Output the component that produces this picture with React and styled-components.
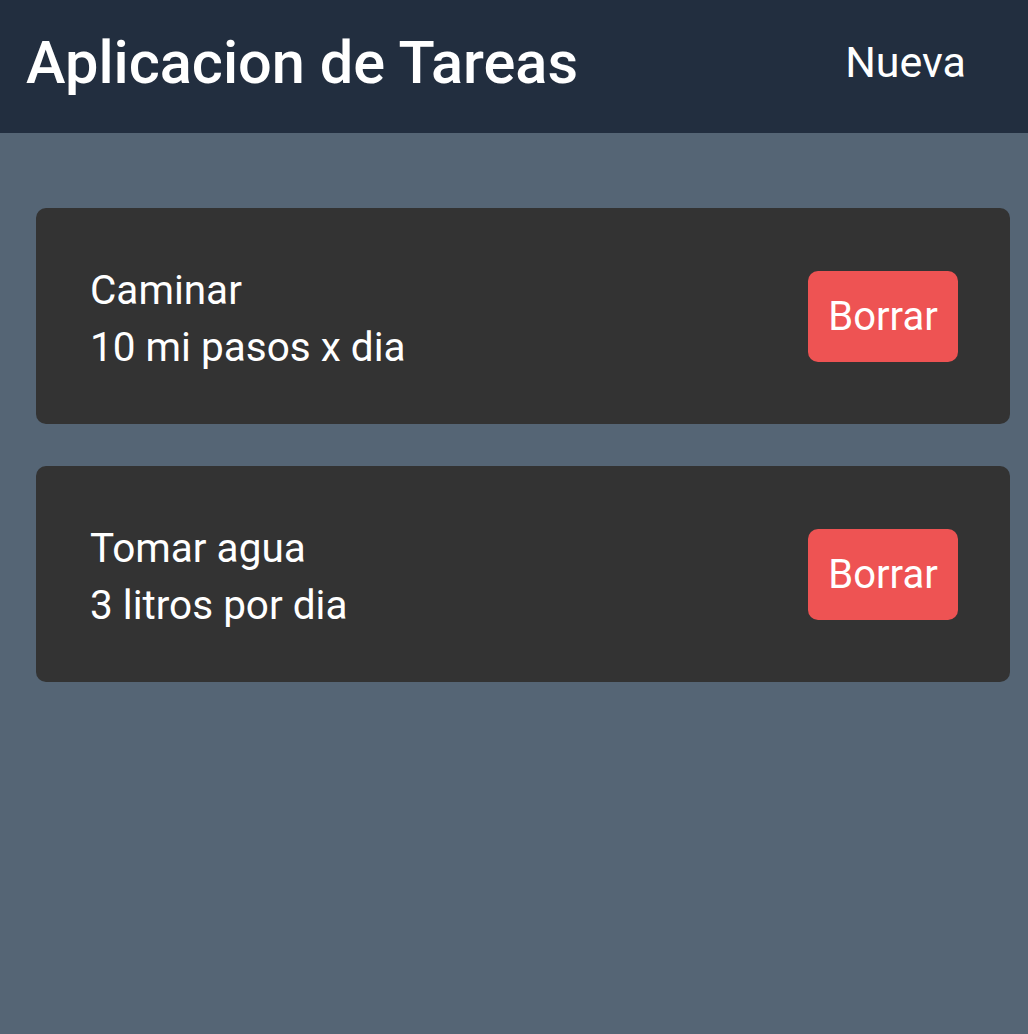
import React from "react";
import styled, { createGlobalStyle } from "styled-components";

const Global = createGlobalStyle`
  html, body { margin: 0; padding: 0; }
  body {
    background: #556575;
    font-family: Roboto, "Noto Sans", "Liberation Sans", sans-serif;
    color: #ffffff;
  }
`;

const Page = styled.div`
  min-height: 1034px;
  background: #556575;
`;

const Header = styled.header`
  height: 133px;
  background: #222e3f;
  display: flex;
  align-items: center;
  justify-content: space-between;
  padding: 0 62px 0 26px;
  box-sizing: border-box;
`;

const Title = styled.h1`
  margin: 0;
  font-size: 59.5px;
  font-weight: 500;
  letter-spacing: 0;
  line-height: 1;
  margin-top: -5px;
`;

const NewLink = styled.a`
  font-size: 43px;
  font-weight: 400;
  color: #ffffff;
  text-decoration: none;
  line-height: 1;
  margin-top: -8px;
  cursor: pointer;
`;

const List = styled.main`
  display: flex;
  flex-direction: column;
  gap: 42px;
  padding: 75px 18px 0 36px;
`;

const Card = styled.div`
  background: #333333;
  border-radius: 10px;
  height: 216px;
  box-sizing: border-box;
  display: flex;
  align-items: center;
  justify-content: space-between;
  padding: 0 52px 0 54px;
`;

const Info = styled.div`
  display: flex;
  flex-direction: column;
  font-size: 40.5px;
  line-height: 57px;
  margin-top: 6px;
`;

const Line = styled.span`
  display: block;
`;

const DeleteButton = styled.button`
  background: #ee5353;
  color: #ffffff;
  border: none;
  border-radius: 10px;
  width: 150px;
  height: 91px;
  font-family: inherit;
  font-size: 40px;
  padding: 0;
  cursor: pointer;
`;

const tasks = [
  { id: 1, title: "Caminar", desc: "10 mi pasos x dia" },
  { id: 2, title: "Tomar agua", desc: "3 litros por dia" },
];

export default function App() {
  return (
    <Page>
      <Global />
      <Header>
        <Title>Aplicacion de Tareas</Title>
        <NewLink>Nueva</NewLink>
      </Header>
      <List>
        {tasks.map((t) => (
          <Card key={t.id}>
            <Info>
              <Line>{t.title}</Line>
              <Line>{t.desc}</Line>
            </Info>
            <DeleteButton>Borrar</DeleteButton>
          </Card>
        ))}
      </List>
    </Page>
  );
}
